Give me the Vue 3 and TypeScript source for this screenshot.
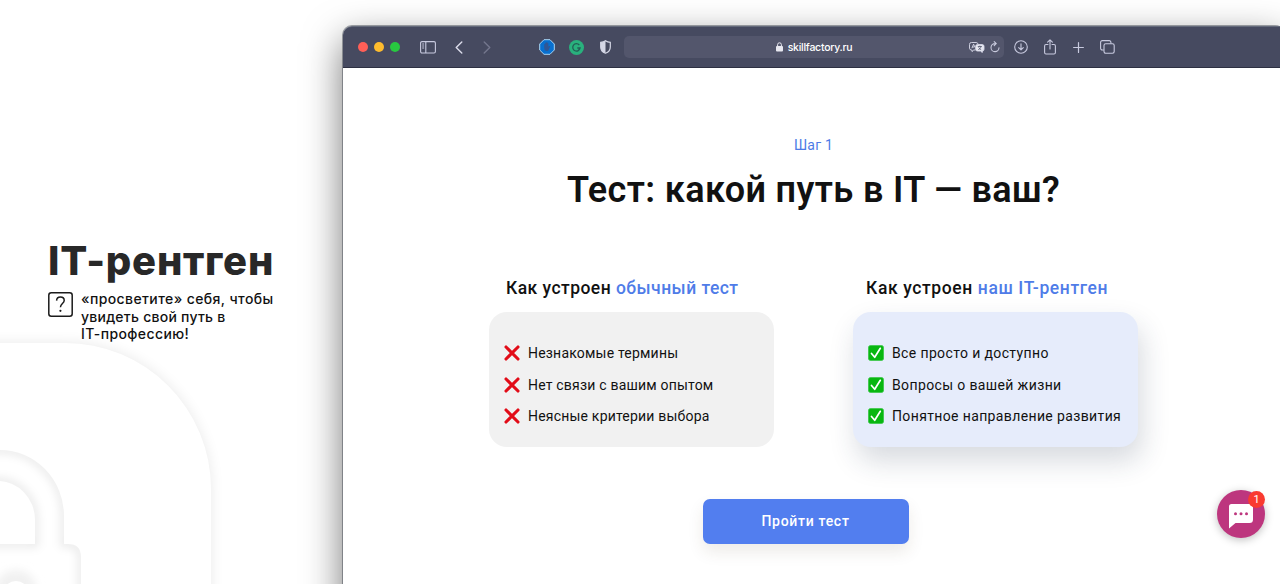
<script setup lang="ts">
interface TestCard {
  kind: 'bad' | 'good'
  accent: string
  items: string[]
}

const cards: TestCard[] = [
  {
    kind: 'bad',
    accent: 'обычный тест',
    items: ['Незнакомые термины', 'Нет связи с вашим опытом', 'Неясные критерии выбора']
  },
  {
    kind: 'good',
    accent: 'наш IT-рентген',
    items: ['Все просто и доступно', 'Вопросы о вашей жизни', 'Понятное направление развития']
  }
]
</script>

<template>
  <div class="page">
    <aside class="intro">
      <!-- Decorative lock plate -->
      <div class="plate" />
      <svg class="lock" width="120" height="144" viewBox="0 0 120 144">
        <defs>
          <clipPath id="lock-clip">
            <path clip-rule="evenodd" d="M-80 10H0A64 66 0 0 1 64 76V104H68Q81 104 81 117V200H-80ZM-60 41H-2A37 39 0 0 1 35 80V104H-60Z" />
          </clipPath>
          <filter id="soft" x="-30%" y="-30%" width="160%" height="160%">
            <feGaussianBlur stdDeviation="4" />
          </filter>
        </defs>
        <g clip-path="url(#lock-clip)">
          <path
            d="M-80 10H0A64 66 0 0 1 64 76V104H68Q81 104 81 117V200H-80ZM-60 41H-2A37 39 0 0 1 35 80V104H-60Z"
            fill="none"
            stroke="#000"
            stroke-opacity="0.085"
            stroke-width="7"
            filter="url(#soft)"
          />
        </g>
        <ellipse cx="16" cy="148" rx="20" ry="18" fill="#f1f1f1" filter="url(#soft)" />
        <ellipse cx="16" cy="154" rx="13" ry="13" fill="#fff" />
      </svg>

      <div class="intro-text">
        <h2>IT-рентген</h2>
        <div class="intro-row">
          <svg class="question" width="25" height="25" viewBox="0 0 25 25" fill="none" stroke="#1b1b1b" stroke-width="1.5">
            <rect x="0.8" y="0.8" width="23.4" height="23.4" rx="2.5" />
            <path d="M8.6 8.6C8.7 6.2 10.2 5 12.4 5s3.8 1.3 3.8 3.4c0 3-3.8 3.3-3.8 6.9" />
            <circle cx="12.4" cy="18.8" r="1.1" fill="#1b1b1b" stroke="none" />
          </svg>
          <p>«просветите» себя, чтобы<br><span class="tight">увидеть свой путь в</span><br>IT-профессию!</p>
        </div>
      </div>
    </aside>

    <section class="browser">
      <header class="toolbar">
        <div class="lights">
          <i class="red" /><i class="yellow" /><i class="green" />
        </div>
        <svg class="sidebar-icon" width="16" height="13" viewBox="0 0 16 13" fill="none" stroke="#c8cadf" stroke-width="1.1">
          <rect x="0.6" y="0.6" width="14.8" height="11.4" rx="1.4" />
          <path d="M5.8 .6V12M2.2 3h1.9M2.2 5h1.9M2.2 7h1.9" />
        </svg>
        <svg class="back" width="8" height="13" viewBox="0 0 8 13" fill="none" stroke="#dcddeb" stroke-width="1.4" stroke-linecap="round" stroke-linejoin="round">
          <path d="M6.8 1L1.2 6.5l5.6 5.5" />
        </svg>
        <svg class="forward" width="8" height="13" viewBox="0 0 8 13" fill="none" stroke="#74778d" stroke-width="1.4" stroke-linecap="round" stroke-linejoin="round">
          <path d="M1.2 1l5.6 5.5L1.2 12" />
        </svg>
        <svg class="octagon" width="16" height="16" viewBox="0 0 16 16">
          <path d="M5 .7h6L15.3 5v6L11 15.3H5L.7 11V5Z" fill="#0870cf" stroke="#a9d5f4" />
          <path d="M5.2 8.7V5.5c0-1 1-1 1 0V4.2c0-1 1-1 1.1 0v-.5c.1-.9 1.1-.8 1.1 0v.7c.1-.8 1-.7 1 0v3.4l1-.8c.7-.3 1 .3.6.8L9.4 11.4c-1.8 1.4-4.2.3-4.2-2.7Z" fill="#315794" />
        </svg>
        <svg class="grammar" width="15" height="15" viewBox="0 0 15 15" fill="none">
          <circle cx="7.5" cy="7.5" r="7.5" fill="#29b17d" />
          <path d="M10.3 5A3.7 3.7 0 1 0 11.1 8H8.3M9.3 10.3l1.7-2" stroke="#235e56" stroke-width="1.3" />
        </svg>
        <svg class="shield" width="11" height="14" viewBox="0 0 11 14">
          <path d="M5.5.7C4 1.8 2.5 2.2.7 2.3V7c0 3.3 2 5.2 4.8 6.2C8.3 12.2 10.3 10.3 10.3 7V2.3C8.5 2.2 7 1.8 5.5.7Z" fill="none" stroke="#d5d7e6" stroke-width="1.2" />
          <path d="M5.5.7V13.2C2.7 12.2.7 10.3.7 7V2.3C2.5 2.2 4 1.8 5.5.7Z" fill="#d5d7e6" />
        </svg>
        <div class="address">
          <svg class="padlock" width="7" height="10" viewBox="0 0 7 10">
            <rect y="4" width="7" height="5.6" rx="1" fill="#e8e8f0" />
            <path d="M1.6 4.5V2.7a1.9 1.9 0 0 1 3.8 0v1.8" fill="none" stroke="#e8e8f0" />
          </svg>
          <span>skillfactory.ru</span>
          <div class="address-tools">
            <svg width="16" height="11" viewBox="0 0 16 11" fill="none" stroke="#d9daea" stroke-width="0.9">
              <path d="M6.5 8H4.8L3 9.6V8H2.4A1.9 1.9 0 0 1 .5 6.1V2.4A1.9 1.9 0 0 1 2.4.5h4.7A1.9 1.9 0 0 1 9 2" />
              <path d="M2.9 6.2l1.7-4 1.3 3M3.5 5h2" />
              <path d="M8.4 2.6h4.9a1.7 1.7 0 0 1 1.7 1.7v3a1.7 1.7 0 0 1-1.7 1.7v1.5L11.5 9H8.4a1.7 1.7 0 0 1-1.7-1.7v-3a1.7 1.7 0 0 1 1.7-1.7Z" fill="#e7e8f1" />
              <path d="M8.8 4.5h4M10.8 3.7v.8M9.3 7.6c1.6-.6 2.4-1.7 2.6-3M9.7 5.3c.5 1.2 1.3 1.9 2.5 2.4" stroke="#4d5168" stroke-width="0.8" />
            </svg>
            <svg width="10" height="12" viewBox="0 0 10 12" fill="none" stroke="#c8cadd" stroke-width="1.1" stroke-linecap="round">
              <path d="M5.8 2.6H5A4 4 0 1 0 9 6.8M4.2.7l2 1.9-2 2" />
            </svg>
          </div>
        </div>
        <svg class="download" width="14" height="14" viewBox="0 0 14 14" fill="none" stroke="#c8cadf" stroke-width="1.1" stroke-linecap="round" stroke-linejoin="round">
          <circle cx="7" cy="7" r="6.3" />
          <path d="M7 3.8v6M4.7 7.6L7 9.9l2.3-2.3" />
        </svg>
        <svg class="share" width="12" height="16" viewBox="0 0 12 16" fill="none" stroke="#c8cadf" stroke-width="1.1" stroke-linecap="round" stroke-linejoin="round">
          <path d="M4 5.5H2A1.4 1.4 0 0 0 .6 6.9v6.7A1.4 1.4 0 0 0 2 15h8a1.4 1.4 0 0 0 1.4-1.4V6.9A1.4 1.4 0 0 0 10 5.5H8M6 10V1M3.6 3.2L6 .8l2.4 2.4" />
        </svg>
        <svg class="plus" width="11" height="11" viewBox="0 0 11 11" stroke="#c8cadf" stroke-width="1.2" stroke-linecap="round">
          <path d="M5.5.6v9.8M.6 5.5h9.8" />
        </svg>
        <svg class="tabs" width="15" height="14" viewBox="0 0 15 14" fill="none" stroke="#c8cadf" stroke-width="1.1">
          <rect x="4" y="3.7" width="10.2" height="9.6" rx="1.7" />
          <path d="M3.8 10H2.3A1.7 1.7 0 0 1 .6 8.3v-6A1.7 1.7 0 0 1 2.3.6h6.9a1.7 1.7 0 0 1 1.7 1.7v1.2" />
        </svg>
      </header>

      <main class="content">
        <span class="step">Шаг 1</span>
        <h1>Тест: какой путь в IT — ваш?</h1>
        <div class="cards">
          <article v-for="card in cards" :key="card.kind" class="card" :class="card.kind">
            <h3>Как устроен <span>{{ card.accent }}</span></h3>
            <ul>
              <li v-for="item in card.items" :key="item">
                <svg v-if="card.kind === 'bad'" width="16" height="16" viewBox="0 0 16 16">
                  <path d="M2 2l12 12M14 2L2 14" stroke="#e20c18" stroke-width="3.1" stroke-linecap="round" />
                </svg>
                <svg v-else width="16" height="16" viewBox="0 0 16 16">
                  <rect x="0.4" y="0.4" width="15.2" height="15.2" rx="2.4" fill="#08b711" stroke="#3ac747" stroke-width="0.8" />
                  <path d="M3.5 8.5l3.2 3.8 5.6-9" fill="none" stroke="#fff" stroke-width="1.7" stroke-linecap="round" stroke-linejoin="round" />
                </svg>
                <span>{{ item }}</span>
              </li>
            </ul>
          </article>
        </div>
        <button type="button">Пройти тест</button>
      </main>
    </section>

    <div class="chat">
      <svg width="26" height="27" viewBox="0 0 26 27">
        <path d="M3.5 1h18A3.5 3.5 0 0 1 25 4.5v12a3.5 3.5 0 0 1-3.5 3.5H7.5L1 25.5V3.5A2.5 2.5 0 0 1 3.5 1Z" fill="#fff" />
        <g fill="#bd367e">
          <circle cx="7.5" cy="10.7" r="1.5" />
          <circle cx="13" cy="10.7" r="1.5" />
          <circle cx="18.5" cy="10.7" r="1.5" />
        </g>
      </svg>
      <span class="badge">1</span>
    </div>
  </div>
</template>

<style>
body {
  margin: 0;
  overflow: hidden;
}
</style>

<style scoped>
.page {
  position: relative;
  display: flex;
  width: 1280px;
  height: 584px;
  overflow: hidden;
  background: #fff;
  font-family: Roboto, "Liberation Sans", sans-serif;
  color: #111;
  white-space: nowrap;
}

h1, h2, h3, p, ul {
  margin: 0;
  padding: 0;
}

svg {
  display: block;
  flex: none;
}

/* Left column */
.intro {
  position: relative;
  flex: none;
  width: 343px;
  font-family: Inter, "Liberation Sans", sans-serif;
}

.plate {
  position: absolute;
  left: -220px;
  top: 343px;
  width: 431px;
  height: 420px;
  border-radius: 146px;
  background: #fff;
  box-shadow: 0 0 14px rgba(0, 0, 0, 0.09);
}

.lock {
  position: absolute;
  left: 0;
  top: 440px;
}

.intro-text {
  position: relative;
  padding: 237px 0 0 48px;
}

.intro-text h2 {
  font-size: 40px;
  line-height: 48px;
  font-weight: 800;
  letter-spacing: 0.75px;
  color: #282828;
}

.intro-row {
  display: flex;
  gap: 8px;
  padding-top: 5px;
}

.question {
  margin-top: 2px;
}

.intro-row p {
  font-size: 14px;
  line-height: 17.5px;
  font-weight: 500;
  letter-spacing: 0.4px;
}

.intro-row .tight {
  letter-spacing: 0.24px;
}

/* Browser window */
.browser {
  position: relative;
  flex: none;
  width: 941px;
  height: 640px;
  margin-top: 26px;
  border-radius: 9px 9px 0 0;
  background: #fff;
  box-shadow: 0 0 0 1px rgba(70, 75, 85, 0.5), 0 14px 38px rgba(0, 0, 0, 0.55);
}

.toolbar {
  display: flex;
  align-items: center;
  box-sizing: border-box;
  height: 42px;
  padding: 0 0 0 15px;
  border-top: 1px solid #656b7c;
  border-bottom: 1px solid #2d3042;
  border-radius: 9px 0 0;
  background: #464a60;
}

.lights {
  display: flex;
  gap: 6px;
  margin-right: 20px;
}

.lights i {
  width: 10px;
  height: 10px;
  border-radius: 50%;
}

.red { background: #ff5f57; }
.yellow { background: #febc2e; }
.green { background: #28c840; }

.back { margin-left: 19px; }
.forward { margin-left: 20px; }
.octagon { margin-left: 48px; }
.grammar { margin-left: 14px; }
.shield { margin-left: 16px; }

.address {
  position: relative;
  display: flex;
  align-items: center;
  justify-content: center;
  gap: 5px;
  width: 380px;
  height: 22px;
  margin-left: 13px;
  border-radius: 5px;
  background: #53566c;
  color: #fff;
  font: 500 10.5px/22px Inter, "Liberation Sans", sans-serif;
  letter-spacing: -0.25px;
}

.address span {
  padding-top: 1px;
}

.address-tools {
  position: absolute;
  right: 4px;
  display: flex;
  align-items: center;
  gap: 5px;
}

.download { margin-left: 10px; }
.share { margin-left: 16px; }
.plus { margin-left: 17px; }
.tabs { margin-left: 16px; }

/* Page inside the window */
.content {
  display: flex;
  flex-direction: column;
  align-items: center;
  padding-top: 67px;
}

.step {
  font-size: 14px;
  line-height: 20px;
  color: #4d7be6;
  letter-spacing: 0.2px;
}

h1 {
  margin-top: 13px;
  font-size: 36px;
  line-height: 44px;
  font-weight: 600;
  letter-spacing: 0.38px;
}

.cards {
  display: flex;
  gap: 79px;
  margin-top: 64px;
}

.card {
  width: 285px;
}

.card h3 {
  padding-left: 17px;
  font-size: 17.5px;
  line-height: 25px;
  font-weight: 500;
  letter-spacing: 0.45px;
}

.card.good h3 {
  padding-left: 13px;
  letter-spacing: 0.61px;
}

.card h3 span {
  color: #4f7ce8;
}

.card ul {
  display: flex;
  flex-direction: column;
  gap: 11.5px;
  box-sizing: border-box;
  height: 135px;
  margin-top: 11.4px;
  padding: 31px 0 0 15px;
  border-radius: 18px;
  background: #f1f1f1;
  list-style: none;
}

.card.good ul {
  background: #e6ecfb;
  box-shadow: 4px 14px 28px rgba(35, 50, 80, 0.18);
}

.card li {
  display: flex;
  align-items: center;
  gap: 8px;
  height: 20px;
  font-size: 14px;
  line-height: 20px;
  letter-spacing: 0.2px;
}

.card.good li {
  letter-spacing: 0.37px;
}

button {
  width: 206px;
  height: 45px;
  margin: 52px 16px 0 0;
  padding: 0;
  border: 0;
  border-radius: 7px;
  background: #527eef;
  box-shadow: 0 8px 16px rgba(80, 60, 30, 0.1);
  color: #fff;
  font: 500 14px/45px Roboto, "Liberation Sans", sans-serif;
  letter-spacing: 0.7px;
}

/* Chat bubble over the page */
.chat {
  position: absolute;
  left: 1217px;
  top: 490px;
  display: flex;
  align-items: center;
  justify-content: center;
  width: 48px;
  height: 48px;
  border-radius: 50%;
  background: #bd367e;
  box-shadow: 0 2px 9px rgba(0, 0, 0, 0.25);
}

.chat svg {
  margin-top: 5px;
}

.badge {
  position: absolute;
  right: 0;
  top: 1px;
  width: 17px;
  height: 17px;
  border-radius: 50%;
  background: #f93a30;
  color: #fff;
  font-size: 11px;
  line-height: 17px;
  text-align: center;
}
</style>
